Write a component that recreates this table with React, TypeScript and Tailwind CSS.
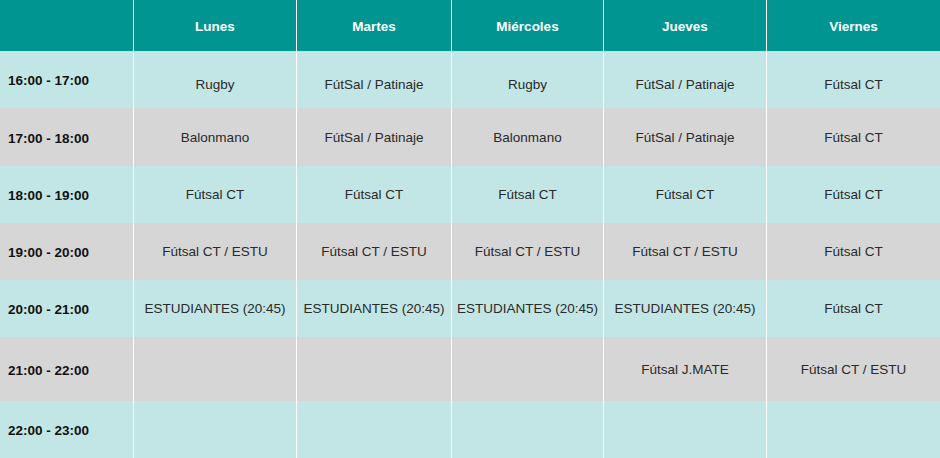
const days = ["Lunes", "Martes", "Miércoles", "Jueves", "Viernes"];

const colWidths = ["w-[162px]", "w-[154px]", "w-[151px]", "w-[162px]", "w-[173px]"];

type Row = {
  time: string;
  height: string;
  bg: string;
  pad: string;
  cells: string[];
};

const rows: Row[] = [
  {
    time: "16:00 - 17:00",
    height: "h-[57px]",
    bg: "bg-[#c2e6e5]",
    pad: "pt-[12px]",
    cells: ["Rugby", "FútSal / Patinaje", "Rugby", "FútSal / Patinaje", "Fútsal CT"],
  },
  {
    time: "17:00 - 18:00",
    height: "h-[58px]",
    bg: "bg-[#d6d6d6]",
    pad: "pt-[3px]",
    cells: ["Balonmano", "FútSal / Patinaje", "Balonmano", "FútSal / Patinaje", "Fútsal CT"],
  },
  {
    time: "18:00 - 19:00",
    height: "h-[57px]",
    bg: "bg-[#c2e6e5]",
    pad: "pt-[2px]",
    cells: ["Fútsal CT", "Fútsal CT", "Fútsal CT", "Fútsal CT", "Fútsal CT"],
  },
  {
    time: "19:00 - 20:00",
    height: "h-[57px]",
    bg: "bg-[#d6d6d6]",
    pad: "pt-[2px]",
    cells: ["Fútsal CT / ESTU", "Fútsal CT / ESTU", "Fútsal CT / ESTU", "Fútsal CT / ESTU", "Fútsal CT"],
  },
  {
    time: "20:00 - 21:00",
    height: "h-[57px]",
    bg: "bg-[#c2e6e5]",
    pad: "pt-[2px]",
    cells: [
      "ESTUDIANTES (20:45)",
      "ESTUDIANTES (20:45)",
      "ESTUDIANTES (20:45)",
      "ESTUDIANTES (20:45)",
      "Fútsal CT",
    ],
  },
  {
    time: "21:00 - 22:00",
    height: "h-[64px]",
    bg: "bg-[#d6d6d6]",
    pad: "pt-[2px]",
    cells: ["", "", "", "Fútsal J.MATE", "Fútsal CT / ESTU"],
  },
  {
    time: "22:00 - 23:00",
    height: "h-[57px]",
    bg: "bg-[#c2e6e5]",
    pad: "pt-[2px]",
    cells: ["", "", "", "", ""],
  },
];

export default function App() {
  return (
    <div className="w-[940px] h-[458px] overflow-hidden bg-white font-['Liberation_Sans',Arial,sans-serif] text-[13.5px]">
      {/* header */}
      <div className="flex h-[51px] gap-px">
        <div className="w-[133px] bg-[#009591]" />
        {days.map((d, i) => (
          <div
            key={d}
            className={`${colWidths[i]} bg-[#009591] flex items-center justify-center pt-1 font-bold text-white`}
          >
            {d}
          </div>
        ))}
      </div>

      {rows.map((row) => (
        <div key={row.time} className={`flex ${row.height} gap-px`}>
          <div className={`w-[133px] ${row.bg} flex items-center pl-2 pt-1 font-bold text-[#111]`}>
            {row.time}
          </div>
          {row.cells.map((c, i) => (
            <div
              key={i}
              className={`${colWidths[i]} ${row.bg} ${row.pad} flex items-center justify-center text-[#2a2a2a] whitespace-nowrap`}
            >
              {c}
            </div>
          ))}
        </div>
      ))}
    </div>
  );
}
